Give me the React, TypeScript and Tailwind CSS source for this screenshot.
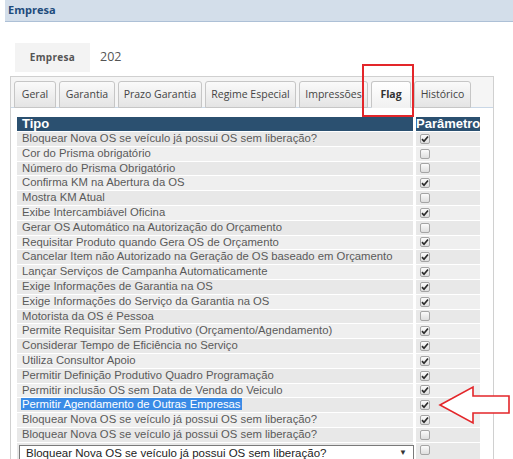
import React from "react";

type Row = { label: string; checked: boolean; selected?: boolean };

const rows: Row[] = [
  { label: "Bloquear Nova OS se veículo já possui OS sem liberação?", checked: true },
  { label: "Cor do Prisma obrigatório", checked: false },
  { label: "Número do Prisma Obrigatório", checked: false },
  { label: "Confirma KM na Abertura da OS", checked: true },
  { label: "Mostra KM Atual", checked: false },
  { label: "Exibe Intercambiável Oficina", checked: true },
  { label: "Gerar OS Automático na Autorização do Orçamento", checked: false },
  { label: "Requisitar Produto quando Gera OS de Orçamento", checked: true },
  { label: "Cancelar Item não Autorizado na Geração de OS baseado em Orçamento", checked: true },
  { label: "Lançar Serviços de Campanha Automaticamente", checked: true },
  { label: "Exige Informações de Garantia na OS", checked: true },
  { label: "Exige Informações do Serviço da Garantia na OS", checked: true },
  { label: "Motorista da OS é Pessoa", checked: false },
  { label: "Permite Requisitar Sem Produtivo (Orçamento/Agendamento)", checked: true },
  { label: "Considerar Tempo de Eficiência no Serviço", checked: true },
  { label: "Utiliza Consultor Apoio", checked: true },
  { label: "Permitir Definição Produtivo Quadro Programação", checked: true },
  { label: "Permitir inclusão OS sem Data de Venda do Veiculo", checked: true },
  { label: "Permitir Agendamento de Outras Empresas", checked: true, selected: true },
  { label: "Bloquear Nova OS se veículo já possui OS sem liberação?", checked: true },
  { label: "Bloquear Nova OS se veículo já possui OS sem liberação?", checked: false },
];

const tabs = [
  { name: "Geral", w: "w-[42px]" },
  { name: "Garantia", w: "w-[56px]" },
  { name: "Prazo Garantia", w: "w-[84px]" },
  { name: "Regime Especial", w: "w-[91px]" },
  { name: "Impressões", w: "w-[69px]" },
  { name: "Flag", w: "w-[40px]", active: true },
  { name: "Histórico", w: "w-[57px]" },
];

function Checkbox({ checked }: { checked: boolean }) {
  return (
    <div className="w-[10px] h-[10px] rounded-[2px] border border-[#a5a5a5] bg-gradient-to-b from-[#fbfbfb] to-[#dedede] flex items-center justify-center">
      {checked && (
        <svg width="8" height="8" viewBox="0 0 8 8">
          <path d="M1 4.2 L3 6.3 L7 1.5" fill="none" stroke="#2b2b2b" strokeWidth="1.7" />
        </svg>
      )}
    </div>
  );
}

export default function App() {
  return (
    <div className="relative w-[513px] h-[459px] overflow-hidden bg-white font-['Liberation_Sans',Arial,sans-serif]">
      {/* cabeçalho */}
      <div className="ml-[5px] h-[22px] bg-[#d3deea] border-b border-[#adc0d6] flex items-center pl-[3px] text-[11px] font-bold text-[#1d4b7c] font-['Open_Sans',sans-serif]">
        Empresa
      </div>

      {/* empresa */}
      <div className="ml-[15px] mt-[21px] h-[29px] flex items-center">
        <div className="w-[75px] h-full bg-[#f3f3f3] flex items-center justify-center text-[10px] font-bold text-[#555] font-['Open_Sans',sans-serif] tracking-[0.3px]">
          Empresa
        </div>
        <span className="ml-[10px] text-[12.5px] text-[#555] font-['Open_Sans',sans-serif]">202</span>
      </div>

      {/* painel de abas */}
      <div className="ml-[10px] mt-[4px] w-[484px] h-[400px] border border-b-0 border-[#d0d0d0]">
        <div className="h-[31px] bg-[#f5f5f5] border-b border-[#c9d7e6] flex items-end gap-[3px] pl-[3px]">
          {tabs.map((t) => (
            <div
              key={t.name}
              className={`${t.w} h-[27px] -mb-px rounded-t-[3px] border border-[#c6c6c6] flex items-center justify-center text-[10.5px] font-['Open_Sans',sans-serif] ${
                t.active
                  ? "bg-gradient-to-b from-[#ffffff] to-[#f1f1f1] font-bold text-[#333] border-b-[#f1f1f1]"
                  : "bg-gradient-to-b from-[#fafafa] to-[#e4e4e4] text-[#444]"
              }`}
            >
              {t.name}
            </div>
          ))}
        </div>

        <div className="pl-[6px] pt-[9px]">
          {/* cabeçalho da tabela */}
          <div className="flex h-[14px] mb-px">
            <div className="w-[396px] bg-[#2b5070] text-white font-bold text-[13px] leading-[14px] pl-[5px]">Tipo</div>
            <div className="w-[64px] ml-[3px] bg-[#2b5070] text-white font-bold text-[13px] leading-[14px] whitespace-nowrap overflow-hidden">
              Parâmetro
            </div>
          </div>

          {rows.map((r, i) => (
            <div key={i} className="flex h-[14.8px]">
              <div className={`w-[396px] h-[13.8px] ${i % 2 === 0 ? "bg-[#e8e8e8]" : "bg-[#efefef]"} pl-[5px] text-[11.3px] leading-[13.8px] text-[#5a5a5a] whitespace-nowrap`}>
                {r.selected ? (
                  <span className="bg-[#3a8be6] text-white px-[1px] -ml-[1px]">{r.label}</span>
                ) : (
                  r.label
                )}
              </div>
              <div className={`w-[64px] h-[13.8px] ml-[3px] ${i % 2 === 0 ? "bg-[#e8e8e8]" : "bg-[#efefef]"} flex items-center pl-[4px]`}>
                <Checkbox checked={r.checked} />
              </div>
            </div>
          ))}

          {/* linha com select */}
          <div className="flex h-[20px]">
            <div className="w-[396px] bg-[#e8e8e8] pl-[2px] pt-[2px]">
              <div className="h-[16px] w-[395px] bg-white border border-[#7a7a7a] flex items-center pl-[6px] pr-[6px] text-[11.5px] leading-[14px] text-[#222]">
                <span className="flex-1 whitespace-nowrap">Bloquear Nova OS se veículo já possui OS sem liberação?</span>
                <span className="text-[8px] text-[#333]">▼</span>
              </div>
            </div>
            <div className="w-[64px] ml-[3px] bg-[#e8e8e8] pl-[4px] pt-[2px]">
              <Checkbox checked={false} />
            </div>
          </div>
        </div>
      </div>

      {/* destaque: caixa vermelha na aba Flag */}
      <div className="absolute left-[362px] top-[64px] w-[52px] h-[53px] border-2 border-[#e3262a]" />

      {/* seta vermelha */}
      <svg className="absolute left-0 top-0" width="513" height="459">
        <polygon
          points="440,405 473,387 473,396 509,396 509,413 473,413 473,423"
          fill="white"
          stroke="#e3262a"
          strokeWidth="1.6"
          strokeLinejoin="miter"
        />
      </svg>
    </div>
  );
}
